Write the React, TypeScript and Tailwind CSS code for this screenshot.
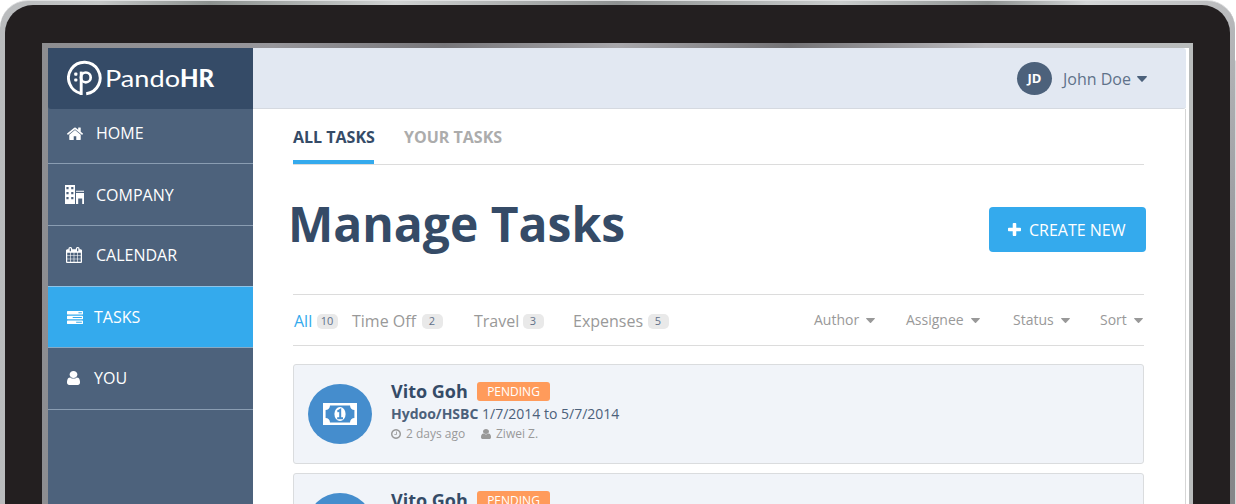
import React from "react";

const paths = {
  home: "M1472 992v480q0 26-19 45t-45 19h-384v-384h-256v384h-384q-26 0-45-19t-19-45v-480q0-1 .5-3t.5-3l575-474 575 474q1 2 1 6zm223-69l-62 74q-8 9-21 11h-3q-13 0-21-7l-692-577-692 577q-12 8-24 7-13-2-21-11l-62-74q-8-10-7-23.5t11-21.5l719-599q32-26 76-26t76 26l244 204v-195q0-14 9-23t23-9h192q14 0 23 9t9 23v408l219 182q10 8 11 21.5t-7 23.5z",
  calendar: "M192 1664h288v-288h-288v288zm352 0h320v-288h-320v288zm-352-352h288v-320h-288v320zm352 0h320v-320h-320v320zm-352-384h288v-288h-288v288zm736 736h320v-288h-320v288zm-384-736h320v-288h-320v288zm768 736h288v-288h-288v288zm-384-352h320v-320h-320v320zm-352-864v-288q0-13-9.5-22.5t-22.5-9.5h-64q-13 0-22.5 9.5t-9.5 22.5v288q0 13 9.5 22.5t22.5 9.5h64q13 0 22.5-9.5t9.5-22.5zm736 864h288v-320h-288v320zm-384-384h320v-288h-320v288zm384 0h288v-288h-288v288zm32-480v-288q0-13-9.5-22.5t-22.5-9.5h-64q-13 0-22.5 9.5t-9.5 22.5v288q0 13 9.5 22.5t22.5 9.5h64q13 0 22.5-9.5t9.5-22.5zm384-64v1280q0 52-38 90t-90 38h-1408q-52 0-90-38t-38-90v-1280q0-52 38-90t90-38h128v-96q0-66 47-113t113-47h64q66 0 113 47t47 113v96h384v-96q0-66 47-113t113-47h64q66 0 113 47t47 113v96h128q52 0 90 38t38 90z",
  tasks: "M1024 1408h640v-128h-640v128zm-384-512h1024v-128h-1024v128zm640-512h384v-128h-384v128zm512 832v256q0 26-19 45t-45 19h-1664q-26 0-45-19t-19-45v-256q0-26 19-45t45-19h1664q26 0 45 19t19 45zm0-512v256q0 26-19 45t-45 19h-1664q-26 0-45-19t-19-45v-256q0-26 19-45t45-19h1664q26 0 45 19t19 45zm0-512v256q0 26-19 45t-45 19h-1664q-26 0-45-19t-19-45v-256q0-26 19-45t45-19h1664q26 0 45 19t19 45z",
  user: "M1536 1399q0 109-62.5 187t-150.5 78h-854q-88 0-150.5-78t-62.5-187q0-85 8.5-160.5t31.5-152 58.5-131 94-89 134.5-34.5q131 128 313 128t313-128q76 0 134.5 34.5t94 89 58.5 131 31.5 152 8.5 160.5zm-256-887q0 159-112.5 271.5t-271.5 112.5-271.5-112.5-112.5-271.5 112.5-271.5 271.5-112.5 271.5 112.5 112.5 271.5z",
  clock: "M1024 544v448q0 14-9 23t-23 9h-320q-14 0-23-9t-9-23v-64q0-14 9-23t23-9h224v-352q0-14 9-23t23-9h64q14 0 23 9t9 23zm416 352q0-148-73-273t-198-198-273-73-273 73-198 198-73 273 73 273 198 198 273 73 273-73 198-198 73-273zm224 0q0 209-103 385.5t-279.5 279.5-385.5 103-385.5-103-279.5-279.5-103-385.5 103-385.5 279.5-279.5 385.5-103 385.5 103 279.5 279.5 103 385.5z",
  plus: "M1600 736v192q0 40-28 68t-68 28h-416v416q0 40-28 68t-68 28h-192q-40 0-68-28t-28-68v-416h-416q-40 0-68-28t-28-68v-192q0-40 28-68t68-28h416v-416q0-40 28-68t68-28h192q40 0 68 28t28 68v416h416q40 0 68 28t28 68z",
};

function Icon({ name, box = "0 0 1792 1792", className }: { name: keyof typeof paths; box?: string; className: string }) {
  return (
    <svg viewBox={box} preserveAspectRatio="none" fill="currentColor" className={`shrink-0 ${className}`}>
      <path d={paths[name]} />
    </svg>
  );
}

function Caret({ className }: { className: string }) {
  return (
    <svg viewBox="0 0 10 6" preserveAspectRatio="none" fill="currentColor" className={`shrink-0 ${className}`}>
      <path d="M0.7 0h8.6q.9.2.5 1L5.6 5.6q-.6.6-1.2 0L.2 1Q-.2.2.7 0z" />
    </svg>
  );
}

function Logo() {
  return (
    <div className="flex h-[61px] shrink-0 items-start rounded-bl-[3px] bg-[#354b67] pl-[19px] pt-[12px] text-white">
      <svg viewBox="0 0 36 36" className="mr-[2px] h-9 w-9 shrink-0" fill="none" stroke="currentColor">
        <path d="M14.2 33.5A15.8 15.8 0 1 1 19.2 33.7" strokeWidth="2.9" />
        <path d="M14.2 11.6V35" strokeWidth="2.9" />
        <circle cx="18.8" cy="17.4" r="4.9" strokeWidth="2.7" />
        <g fill="currentColor" stroke="none">
          <rect x="7.2" y="12.6" width="3.2" height="3.2" rx="1" />
          <rect x="7.2" y="18.4" width="3.2" height="3.2" rx="1" />
        </g>
      </svg>
      <span className="flex whitespace-nowrap font-[Lato] text-[24px] leading-[35px]">
        <span className="w-[75px] origin-left scale-x-[1.13]">Pando</span>
        <b className="font-black">HR</b>
      </span>
    </div>
  );
}

function Company() {
  return (
    <svg viewBox="0 0 19 19" className="h-[19px] w-[19px] shrink-0" fill="currentColor">
      <path fillRule="evenodd" d="M0 0h10v19H0zM1.4 2v2.3h2.2V2zm4.8 0v2.3h2.2V2zM1.4 7v2.3h2.2V7zm4.8 0v2.3h2.2V7zM1.4 12v2.3h2.2V12zm4.8 0v2.3h2.2V12z" />
      <path d="M11 5.7h8v1.1h-8zM11 8h8v11h-1.8v-5.4h-4V19H11z" />
    </svg>
  );
}

function NavItem({ icon, label, className }: { icon: React.ReactNode; label: string; className: string }) {
  return (
    <div className={`flex shrink-0 items-center border-b text-[16px] leading-none text-white ${className}`}>
      {icon}
      <span>{label}</span>
    </div>
  );
}

function Filter({ label, count, className = "" }: { label: string; count: string; className?: string }) {
  return (
    <div className={`flex shrink-0 items-center whitespace-nowrap ${className}`}>
      <span className="flex-1 pt-px">{label}</span>
      <span className="mt-[2px] flex h-[15px] w-[21px] items-center justify-center rounded-[5px] bg-[#e9e9e9] pr-px text-[11px] text-[#62718a]">{count}</span>
    </div>
  );
}

function Sorter({ label, className }: { label: string; className: string }) {
  return (
    <div className={`flex shrink-0 items-center justify-between whitespace-nowrap ${className}`}>
      <span className="pb-[2px]">{label}</span>
      <Caret className="h-[5px] w-[9px]" />
    </div>
  );
}

function TaskCard() {
  return (
    <div className="flex h-[100px] w-[851px] shrink-0 rounded-[3px] border border-[#dadcde] bg-[#f1f4f9] pl-[14px] pt-[19px]">
      <div className="flex h-[60px] w-[64px] shrink-0 items-center justify-center rounded-[50%] bg-[#458dcd]">
        <svg viewBox="0 0 34 22" className="h-[22px] w-[34px]">
          <path fill="#fff" d="M0 0h34v22H0z" />
          <path fill="#458dcd" d="M7 2.6h20a4.4 4.4 0 0 0 4.4 4.4v8a4.4 4.4 0 0 0-4.4 4.4H7a4.4 4.4 0 0 0-4.4-4.4V7A4.4 4.4 0 0 0 7 2.6z" />
          <ellipse cx="17" cy="11" rx="5.6" ry="7" fill="#fff" />
          <path fill="none" stroke="#458dcd" strokeWidth="2" d="M14.4 8.6l2.8-1.8v7.6M14.2 15.3h5.8" />
        </svg>
      </div>
      <div className="ml-[19px] whitespace-nowrap">
        <div className="flex h-[18px] items-start">
          <span className="-mt-[2px] w-[86px] text-[18px] font-bold leading-[18px] text-[#354b67]">Vito Goh</span>
          <span className="-mt-[2px] flex h-[19px] w-[73px] items-center justify-center rounded-[3px] bg-[#ff9b5b] text-[12px] text-white">PENDING</span>
        </div>
        <div className="mt-[2px] h-[20px] text-[14px] leading-[20px] text-[#4c617b]">
          <b className="font-bold">Hydoo/HSBC</b> 1/7/2014 to 5/7/2014
        </div>
        <div className="flex h-[20px] items-center text-[12px] text-[#999]">
          <Icon name="clock" box="128 128 1536 1536" className="mr-[5px] h-[10px] w-[10px]" />
          <span className="w-[75px]">2 days ago</span>
          <Icon name="user" box="256 128 1280 1536" className="mr-[5px] h-[10px] w-[10px]" />
          <span>Ziwei Z.</span>
        </div>
      </div>
    </div>
  );
}

export default function App() {
  return (
    <div className="h-[504px] w-[1236px] overflow-hidden bg-[linear-gradient(180deg,#fff_0px,#fff_60px,#d9dadb_61px)] font-['Open_Sans',sans-serif] antialiased">
      <div className="h-[540px] w-[1235px] rounded-t-[28px] border-t border-[#dfe0e1] bg-[linear-gradient(180deg,#b9babc_0%,#a0a1a5_35%,#88898c_70%,#858588_100%),linear-gradient(90deg,#b9bbbd_0%,#c5c7c7_8%,#8c918f_17%,#d0d2d2_32%,#8f9292_50%,#c9cccc_68%,#8d9190_80%,#d3d5d6_88%,#b9babc_100%)] bg-[length:5px_100%,100%_100%] bg-[position:right_top,left_top] bg-no-repeat pl-[5px] pr-[5px] pt-[4px]">
        <div className="h-full rounded-t-[28px] bg-[#231f20] pl-[37px] pt-[38px] pr-[37px]">
          <div className="flex h-full bg-[linear-gradient(90deg,#8d8d90_0%,#97969b_20%,#77767a_35%,#a8a7ab_50%,#737275_65%,#bdbcc0_82%,#b9bcbc_100%)] pl-[6px] pr-[4px] pt-[5px]">
            <aside className="flex w-[205px] shrink-0 flex-col bg-[#4d627c]">
              <Logo />
              <NavItem className="h-[55px] border-[#8a9db2] pb-[6px] pl-[19px]" label="HOME" icon={<Icon name="home" box="90 200 1612 1336" className="mr-[13px] h-[13px] w-[16px]" />} />
              <NavItem className="h-[62px] border-[#8a9db2] pl-[17px]" label="COMPANY" icon={<div className="mr-[12px]"><Company /></div>} />
              <NavItem className="h-[61px] border-[#8fc4e8] pb-[2px] pl-[18px]" label="CALENDAR" icon={<Icon name="calendar" box="64 0 1664 1792" className="mr-[14px] h-[16px] w-[16px]" />} />
              <NavItem className="h-[61px] border-[#8aa9c2] bg-[#34aaed] pl-[19px]" label="TASKS" icon={<Icon name="tasks" box="0 128 1792 1408" className="mr-[11px] h-[13px] w-[16px]" />} />
              <NavItem className="h-[62px] border-[#8a9db2] pb-px pl-[19px]" label="YOU" icon={<Icon name="user" box="256 128 1280 1536" className="mr-[14px] h-[14px] w-[13px]" />} />
            </aside>
            <main className="flex min-w-0 flex-1 flex-col bg-white">
              <header className="flex h-[61px] w-[933px] shrink-0 items-center rounded-r-[3px] border-b border-[#d5d9e0] bg-[#e2e8f2] pl-[764px] pt-px text-[#4c617b]">
                <div className="flex h-[33px] w-[35px] items-center justify-center rounded-[50%] bg-[#4c617b] text-[13px] font-bold text-white">JD</div>
                <span className="ml-[11px] w-[74px] whitespace-nowrap text-[16px] text-[#5f728a]">John Doe</span>
                <Caret className="h-[6px] w-[10px]" />
              </header>
              <div className="flex w-[933px] flex-1 flex-col border-r border-[#d6d6d6] pl-[40px]">
                <div className="flex h-[56px] w-[851px] shrink-0 border-b border-[#dcdcdc] text-[16px] font-bold">
                  <div className="w-[81px] whitespace-nowrap border-b-4 border-[#34aaed] pt-[16px] text-[#354b67]">ALL TASKS</div>
                  <div className="ml-[30px] whitespace-nowrap pt-[16px] text-[#acacac]">YOUR TASKS</div>
                </div>
                <div className="flex h-[129px] w-[853px] shrink-0 items-center justify-between">
                  <h1 className="-ml-[5px] whitespace-nowrap pb-[12px] text-[48px] font-bold leading-none text-[#354b67]">Manage Tasks</h1>
                  <button className="flex h-[45px] w-[157px] items-center rounded-[4px] bg-[#34aaed] pl-[19px] text-[16px] text-white">
                    <Icon name="plus" box="192 128 1408 1408" className="mr-[8px] h-[13px] w-[13px]" />
                    <span className="whitespace-nowrap">CREATE NEW</span>
                  </button>
                </div>
                <div className="flex h-[52px] w-[851px] shrink-0 items-center border-y border-[#dcdcdc] text-[16px] text-[#999]">
                  <Filter label="All" count="10" className="ml-px w-[44px] text-[#34aaed]" />
                  <Filter label="Time Off" count="2" className="ml-[14px] w-[91px]" />
                  <Filter label="Travel" count="3" className="ml-[31px] w-[70px]" />
                  <Filter label="Expenses" count="5" className="ml-[29px] w-[96px]" />
                  <div className="ml-auto mr-px flex text-[14px]">
                    <Sorter label="Author" className="w-[61px]" />
                    <Sorter label="Assignee" className="ml-[31px] w-[74px]" />
                    <Sorter label="Status" className="ml-[33px] w-[57px]" />
                    <Sorter label="Sort" className="ml-[30px] w-[43px]" />
                  </div>
                </div>
                <div className="mt-[18px] flex flex-col gap-[9px]">
                  <TaskCard />
                  <TaskCard />
                </div>
              </div>
            </main>
          </div>
        </div>
      </div>
    </div>
  );
}
